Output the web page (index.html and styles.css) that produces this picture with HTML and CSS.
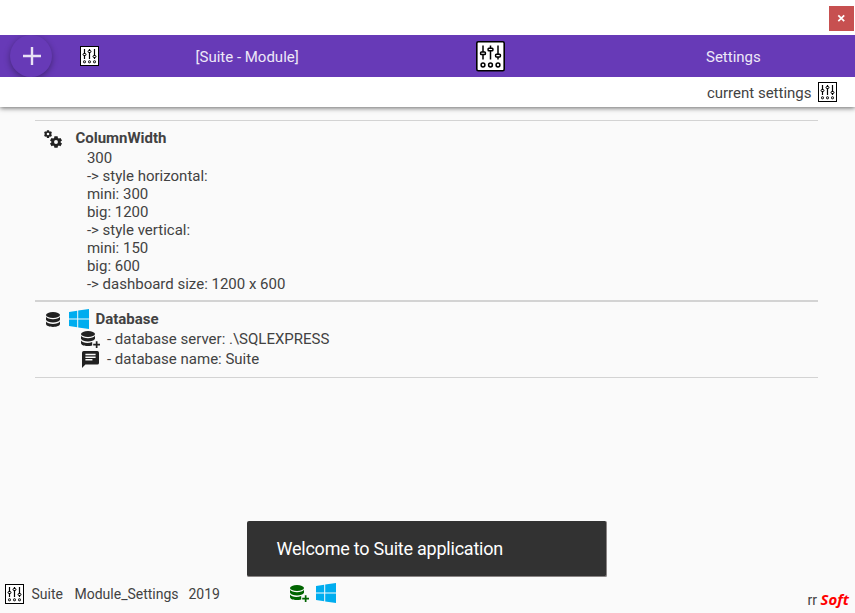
FILE: index.html
```html
<!DOCTYPE html>
<html lang="en">
<head>
<meta charset="utf-8">
<title>Suite - Settings</title>
<link rel="stylesheet" href="styles.css">
</head>
<body>
<svg class="sprite" aria-hidden="true">
  <symbol id="mixer" viewBox="0 0 29 31">
    <rect x=".8" y=".8" width="27.400" height="28.900" rx="1.500" fill="#fff" stroke="#000" stroke-width="1.600"/>
    <g fill="#fff" stroke="#000" stroke-width="1.500">
      <path d="M7 4.500V18.500M14.500 4.500V18.500M22 4.500V18.500" stroke-width="1.500"/>
      <rect x="4.600" y="11" width="4.800" height="2.600" rx=".8"/><rect x="12.100" y="7.200" width="4.800" height="2.600" rx=".8"/><rect x="19.600" y="13.300" width="4.800" height="2.600" rx=".8"/>
      <circle cx="7" cy="24" r="1.900"/><circle cx="14.500" cy="24" r="1.900"/><circle cx="22" cy="24" r="1.900"/>
    </g>
  </symbol>
  <symbol id="mixer-small" viewBox="0 0 19 20">
    <rect x=".5" y=".5" width="18" height="19" fill="#fff" stroke="#000"/>
    <g fill="#fff" stroke="#000">
      <path d="M4.500 3V13M9.500 3V13M14.500 3V13" stroke-width="1.200"/>
      <rect x="3" y="7.500" width="3" height="2" rx="1"/><rect x="8" y="4.500" width="3" height="2" rx="1"/><rect x="13" y="9.500" width="3" height="2" rx="1"/>
      <rect x="3.500" y="14.800" width="2" height="2" rx=".6"/><rect x="8.500" y="14.800" width="2" height="2" rx=".6"/><rect x="13.500" y="14.800" width="2" height="2" rx=".6"/>
    </g>
  </symbol>
  <symbol id="gear" viewBox="0 0 24 24">
    <path fill-rule="evenodd" d="M8.800.5h6.400l.6 3.500 1.900 1.100 3.300-1.200 3 5.300-2.700 2v1.800l2.700 2.200-3 5.200-3.300-1.200-1.900 1.100-.6 3.400H8.800l-.6-3.400-1.900-1.100L3 20.400l-3-5.200L2.700 13v-1.800L0 9.200l3-5.300 3.300 1.200L8.200 4zM12 8.200a3.900 3.900 0 1 0 0 7.800 3.900 3.900 0 0 0 0-7.800z"/>
  </symbol>
  <symbol id="database" viewBox="0 0 14 15">
    <ellipse cx="7" cy="3" rx="7" ry="3"/>
    <path d="M0 4.800c1.500 3.200 12.500 3.200 14 0v3c-1.500 3.500-12.500 3.500-14 0zM0 9.600c1.500 3.200 12.500 3.200 14 0v2.200c0 4.200-14 4.200-14 0z"/>
  </symbol>
  <symbol id="database-plus" viewBox="0 0 19 17">
    <ellipse cx="7" cy="3" rx="7" ry="3"/>
    <path d="M0 4.800c1.500 3.200 12.500 3.200 14 0v3c-1.500 3.500-12.500 3.500-14 0zM0 9.600c1.500 2.600 7.500 3 11.200 1.400v3.500C6.500 15.700 0 15 0 12z"/>
    <path d="M14.800 10.200h1.700v2.600H19v1.700h-2.500V17h-1.700v-2.500h-2.600v-1.700h2.600z"/>
  </symbol>
  <symbol id="windows" viewBox="0 0 20 20">
    <path fill="#00adef" d="M0 3l8.200-1.200v7.700H0zM9.200 1.600L20 0v9.500H9.200zM0 10.500h8.200v7.700L0 17zM9.200 10.500H20V20L9.200 18.400z"/>
  </symbol>
  <symbol id="chat" viewBox="0 0 17 17">
    <path fill-rule="evenodd" d="M1.700 0h13.600Q17 0 17 1.700v10.200q0 1.700-1.700 1.700H3.400L0 17V1.700Q0 0 1.700 0zM3.400 2.700v1.500h10.200V2.700zm0 2.700v1.500h10.200V5.400zm0 2.700v1.500h7V8.100z"/>
  </symbol>
</svg>

<div class="titlebar"><button class="close" aria-label="Close"><svg width="9" height="9" viewBox="0 0 9 9"><path d="M1.300 1.300L7.200 7.200M7.200 1.300L1.300 7.200" stroke="#fff" stroke-width="1.700"/></svg></button></div>

<header class="toolbar">
  <button class="add" aria-label="Add"><svg width="18" height="18" viewBox="0 0 18 18"><path d="M0 9H18M9 0V18" stroke="#e9e2f5" stroke-width="2.400"/></svg></button>
  <svg class="mini"><use href="#mixer-small"/></svg>
  <span class="module">[Suite - Module]</span>
  <svg class="large"><use href="#mixer"/></svg>
  <span class="page">Settings</span>
</header>

<div class="subbar"><span>current settings</span><svg class="mini"><use href="#mixer-small"/></svg></div>

<main>
  <section class="group columns">
    <div class="heading">
      <svg class="gears" viewBox="0 0 18 19"><use href="#gear" width="8" height="8"/><use href="#gear" x="6" y="6" width="12" height="12"/></svg>
      <h2>ColumnWidth</h2>
    </div>
    <ul class="values">
      <li>300</li>
      <li>-&gt; style horizontal:</li>
      <li>mini: 300</li>
      <li>big: 1200</li>
      <li>-&gt; style vertical:</li>
      <li>mini: 150</li>
      <li>big: 600</li>
      <li>-&gt; dashboard size: 1200 x 600</li>
    </ul>
  </section>
  <section class="group database">
    <div class="heading">
      <svg class="db"><use href="#database"/></svg>
      <svg class="win"><use href="#windows"/></svg>
      <h2>Database</h2>
    </div>
    <div class="entry"><svg class="dbplus"><use href="#database-plus"/></svg><span>- database server: .\SQLEXPRESS</span></div>
    <div class="entry"><svg class="chat"><use href="#chat"/></svg><span>- database name: Suite</span></div>
  </section>
</main>

<div class="toast">Welcome to Suite application</div>

<footer>
  <svg class="mini"><use href="#mixer-small"/></svg>
  <span class="app">Suite</span>
  <span class="mod">Module_Settings</span>
  <span class="year">2019</span>
  <svg class="dbplus green"><use href="#database-plus"/></svg>
  <svg class="win"><use href="#windows"/></svg>
  <span class="brand">rr <b>Soft</b></span>
</footer>
</body>
</html>
```
FILE: styles.css
```css
* { box-sizing: border-box; }
body {
  margin: 0;
  height: 613px;
  display: flex;
  flex-direction: column;
  overflow: hidden;
  background: #fafafa;
  color: #424242;
  font: 15px/18px Roboto, sans-serif;
}
svg { display: block; flex: none; }
span, h2 { white-space: nowrap; }
button { border: 0; padding: 0; display: flex; align-items: center; justify-content: center; }
.sprite { position: absolute; width: 0; height: 0; }
.mini { width: 19px; height: 20px; }
.titlebar { height: 35px; padding: 6px 1px 0 0; display: flex; justify-content: flex-end; background: #fff; }
.close { width: 25px; height: 25px; background: #c75050; }
.toolbar { height: 42px; display: flex; align-items: center; background: #673ab7; color: #eee8f7; flex: none; overflow: hidden; }
.toolbar span { padding-top: 2px; }
.add { width: 42px; height: 42px; margin-left: 10px; border-radius: 50%; background: #673ab7; box-shadow: 0 2px 6px rgba(0,0,0,.35); flex: none; }
.add svg { margin-left: 1px; }
.toolbar .mini { margin-left: 28px; }
.module { width: 280.500px; margin-left: 96.500px; }
.large { width: 29px; height: 31px; }
.page { margin-left: 201px; }
.subbar { height: 30px; flex: none; padding-right: 18px; display: flex; justify-content: flex-end; align-items: center; gap: 6.500px; background: #fff; box-shadow: 0 1px 5px rgba(0,0,0,.6); clip-path: inset(0 0 -8px 0); }
.subbar span { padding-top: 2px; }
main { margin: 13px 37.500px 0 35.400px; }
.group { border-top: 1px solid #d3d3d3; border-bottom: 1px solid #d3d3d3; }
.columns { height: 181px; padding-top: 8px; }
.database { height: 77px; padding-top: 8px; }
.heading { display: flex; height: 20px; }
h2 { margin: 0; font-size: 15px; line-height: 18px; font-weight: 700; }
.gears { width: 18px; height: 19px; margin: 1px 13px 0 9px; fill: #212121; }
.values { list-style: none; margin: 0 0 0 51.500px; padding: 0; }
.db { width: 14px; height: 15px; margin: 2px 9px 0 10.600px; fill: #212121; }
.win { width: 20px; height: 20px; }
.heading .win { margin-top: -1px; }
.database h2 { margin-left: 6.500px; }
.entry { height: 20px; display: flex; padding-left: 45.600px; }
.entry svg { margin-top: 1px; fill: #212121; }
.entry span { margin-left: 7px; }
.dbplus { width: 19px; height: 17px; }
.chat { width: 17px; height: 17px; margin-left: 1px; }
.entry .chat + span { margin-left: 8px; }
.toast { position: absolute; left: 247px; top: 521px; width: 360px; height: 56px; padding: 0 29.500px; border-radius: 2px; background: #323232; border-right: 1px solid #8a8585; border-bottom: 1px solid #8a8585; color: #fff; font-size: 18px; letter-spacing: -.23px; line-height: 55px; }
footer { margin-top: auto; height: 30px; display: flex; align-items: flex-start; padding: 1px 6px 0 5px; font-size: 14px; line-height: 20px; }
.app { width: 43px; margin-left: 7.500px; }
.mod { width: 114px; }
.year { width: 101px; }
.green { margin-top: 1px; fill: #006400; }
footer .win { margin: -1px 0 0 7px; }
.brand { margin: 5px 0 0 auto; }
.brand b { color: #f00; font: italic bold 15px/20px "Open Sans", sans-serif; }
```
